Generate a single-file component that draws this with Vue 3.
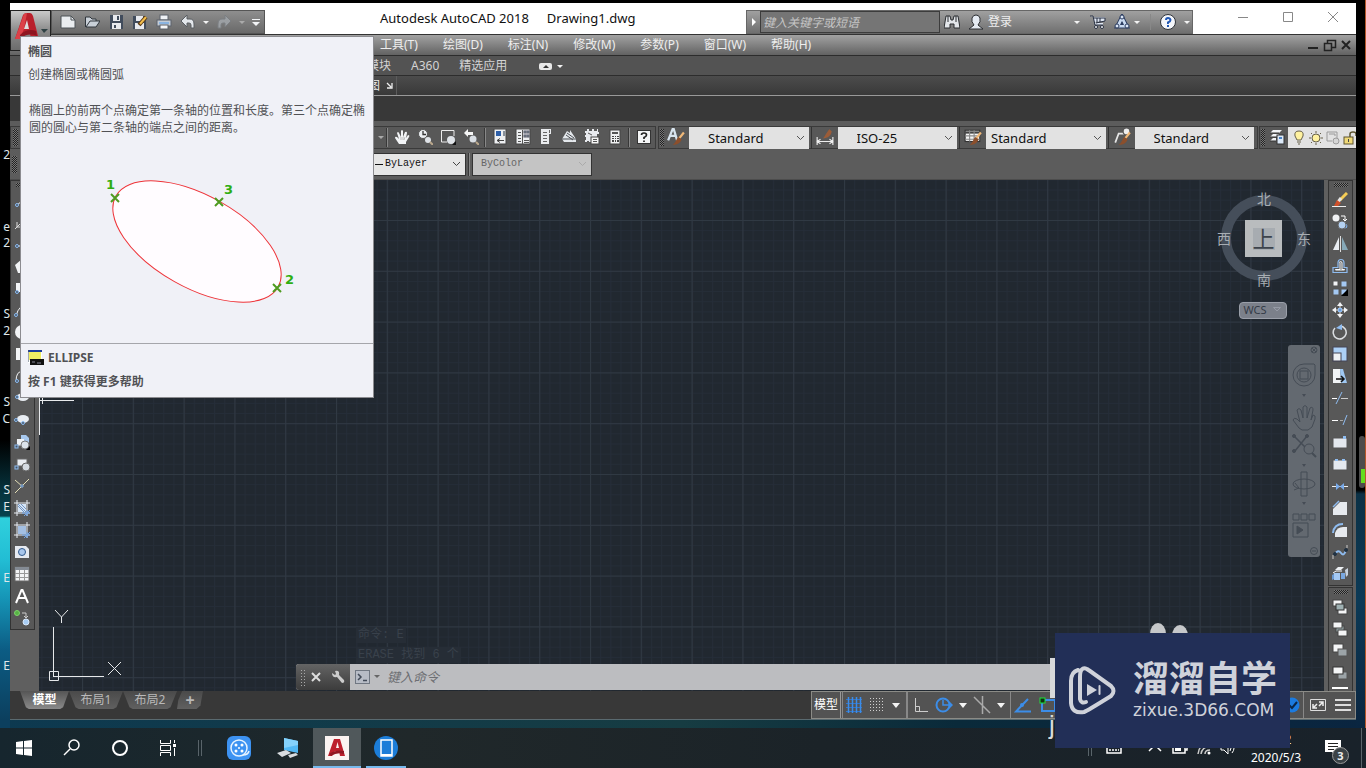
<script setup>
import { ref } from 'vue'

const W = '#f2f4f6'
const B = '#8fbcf0'
const S = (d, c = W, w = 1) => `<path d="${d}" fill="none" stroke="${c}" stroke-width="${w}"/>`
const F = (d, c = W) => `<path d="${d}" fill="${c}"/>`
const R = (x, y, w, h, f = W, s = 'none') => `<rect x="${x}" y="${y}" width="${w}" height="${h}" fill="${f}" stroke="${s}"/>`
const C = (x, y, r, f = W, s = 'none') => `<circle cx="${x}" cy="${y}" r="${r}" fill="${f}" stroke="${s}"/>`
const brush = S('M15 4L11 9', '#f0b878', 2) + F('M10 8L13 10C12 13 10 15 5 15C8 13 8 10 10 8Z', '#8c4f2c')

const icons = {
  new: F('M1 2H11L15 6V14H1Z', '#e9ecef') + S('M1 2H11L15 6V14H1ZM11 2V6H15', '#4d5257'),
  open: F('M1 3H6L8 5H12V7H16L12 13H2Z', '#c9d0d8') + S('M1.500 13V3H6L8 5H12V7M2 13L6 7H16L12 13Z', '#30363d'),
  save: F('M2 1H15V15H2Z', '#414c5c') + R(5, 1, 7, 6, '#e8eaee') + R(9, 2, 2, 4, '#414c5c') + R(4, 9, 9, 6, '#e8eaee') + R(6, 11, 2, 3, '#414c5c'),
  saveas: F('M1 2H14V15H1Z', '#414c5c') + R(4, 2, 7, 5, '#e8eaee') + R(3, 9, 9, 6, '#e8eaee') + S('M14 3L7 11', '#5a3a14', 4) + S('M14 3L8 10', '#f2bd4c', 2),
  print: R(4, 1, 8, 5, '#eef1f5', '#5c636c') + R(1, 6, 14, 6, '#c4ccd6', '#5c636c') + R(3, 8, 10, 2, '#8ab4e2') + R(4, 11, 8, 4, '#f6f7f9', '#5c636c'),
  undo: F('M1 7L7 1V5H10Q14 5 14 10V14H11V11Q11 9 9 9H7V13Z', '#e3e7eb') + S('M1 7L7 1V5H10Q14 5 14 10V14H11V11Q11 9 9 9H7V13Z', '#5a5e63'),
  redo: F('M15 7L9 1V5H6Q2 5 2 10V14H5V11Q5 9 7 9H9V13Z', '#9b9fa3') + S('M15 7L9 1V5H6Q2 5 2 10V14H5V11Q5 9 7 9H9V13Z', '#7b7e82'),
  custom: R(4, 5, 8, 1) + F('M4 8H12L8 12Z'),
  hand: F('M5 15L1 9Q1 7 3 8L5 10L3 4Q4 2 5 4L7 8V2Q8 0 9 2V8L11 3Q13 2 13 4L12 9L14 6Q16 6 15 8L12 13V15Z') + S('M7 8V11M9 8V11M11 8L10 11', '#999', 0.6),
  zoomrt: C(6, 5, 4.500, '#eceff2', '#555') + S('M6 2V5.500H9', '#333', 1.3) + C(11, 11, 3, '#dfe3e8') + S('M13 13L16 16', '#b9a78c', 2),
  zoomwin: S('M14 7V1.500H1.500V13H7', '#ececec') + C(11, 11, 4, '#dfe3e8') + F('M12 16H16V12Z', '#111'),
  zoomprev: F('M1 4L5 0V3H10V6H5V8Z', '#f5f5f5') + C(10, 10, 3.500, '#d9dee4') + S('M13 13L16 16', '#b9a78c', 2),
  props: R(2, 0, 12, 15, '#eef0f2', '#444') + R(4, 2, 5, 5, '#2e5fa8') + R(11, 2, 2, 5, '#86909b') + S('M5 11.500H12M8 9.500L5 11.500L8 13.500', '#444'),
  design: R(1, 0, 14, 15, '#eef0f2', '#444') + S('M3 3.500H6M3 6.500H6M3 9.500H6M3 12.500H6M7.500 1V15', '#555') + R(9, 2, 2, 2, '#9bb', '#556') + R(12, 2, 2, 2, '#9bb', '#556') + R(9, 6, 2, 2, '#9bb', '#556') + R(12, 6, 2, 2, '#9bb', '#556') + S('M9 11.500H14M9 13.500H14', '#555'),
  palette: F('M3 0H13V5H11V15H3Z', '#e9ebee') + S('M5 3.500H9M5 6.500H9M5 9.500H9M5 12.500H9M11.500 1V4', '#666'),
  sheet: F('M1 10L6 2L9 4V1L15 10V13H3Z', '#e4e8ec') + S('M1 10H15M5 6L12 11M6 4L13 9', '#4d5055'),
  markup: F('M1 2H3V0H5V2H8V0H10V2H13V0H14V3H15V5H13V8H7V13H5V12H3V13H1V11H2V8H1V6H2V4H1Z', '#e8eaee') + R(7, 8, 8, 7, '#f5f5f5', '#444') + S('M9 10.500H13M9 12.500H13M4 4L8 6', '#555'),
  calc: R(3, 1, 10, 14, '#f0f1f2', '#444') + R(5, 3, 6, 2, '#555') + F('M5 7H7V8H5ZM8 7H9V8H8ZM10 7H12V8H10ZM5 9H7V10H5ZM8 9H9V10H8ZM10 9H12V10H10ZM5 11H7V13H5ZM8 11H9V13H8ZM10 11H12V13H10Z', '#444'),
  help: R(1.500, 1.500, 13, 13, '#f4f5f6', '#333') + S('M5.500 6Q5.500 4 8 4T10.500 6Q10.500 7.500 8 8.500V10M8 11.500V13', '#222', 1.700),
  textstyle: S('M1 11L5 1H6L9 11M3 7H8', '#d8e4ee', 2) + brush,
  dimstyle: S('M1 8V15M15 8V15M1 12H15M4 10L1 12L4 14M12 10L15 12L12 14', '#eee', 1) + F('M12 1L14 3C13 7 11 9 6 9C8 8 9 4 12 1Z', '#9b5c38'),
  tablestyle: R(1, 2, 13, 10, '#f5f5f5', '#333') + S('M1 4H14', '#444', 2) + S('M1 7H14M1 10H14M5 2V12M9 2V12', '#888') + brush,
  mleader: S('M2 13L5 5H10', '#e6e6e6', 1.500) + C(12, 3, 3, '#eee', '#555') + brush,
  layers: F('M4 1H13L10 4H1ZM4 5H10L8 8H1ZM4 9H7V12H1Z') + S('M1 4H10M1 8H8M1 12H7', '#333') + R(8, 6, 7, 9, '#dce9f8', '#333') + R(10, 8, 3, 2, '#4c82c4'),
  bulb: F('M8 1Q13 1 12 6L10 10H6L4 6Q3 1 8 1Z', '#fff2a0') + S('M8 1Q13 1 12 6L10 10H6L4 6Q3 1 8 1ZM6 12H10M7 14H9', '#66604a'),
  sun: C(8, 8, 4, '#fff2a0', '#66604a') + S('M8 1V3M8 13V15M1 8H3M13 8H15M3 3L4 4M12 12L13 13M13 3L12 4M3 13L4 12', '#66604a'),
  vpfreeze: S('M2 2H12V8M2 2V11H7M4 4H10V6', '#9a9a9a') + C(11, 11, 3, '#d5d5d5', '#9a9a9a'),
  lock: R(2, 7, 9, 7, '#efd979', '#5e5530') + S('M8 7V4Q8 2 11 2T14 4V6', '#5e5530', 1.500) + R(6, 9, 1, 3, '#444'),
  line: S('M2 14L15 3') + C(3, 13, 1.500, '#456', B),
  xline: S('M1 15L15 1M3 8V13H8', '#ddd'),
  pline: S('M2 10H9Q14 9 14 4') + C(3, 10, 1.500, '#456', B),
  polygon: F('M1 7L8 1L15 7L12 15H4Z'),
  rect: R(2, 3, 13, 9) + C(3, 12, 1.500, '#456', B),
  arc: S('M2 14Q5 2 14 3') + C(2, 13, 1.500, '#456', B),
  circle: C(8, 8, 7),
  cloud: F('M2 2H14V14H2Z'),
  spline: S('M2 14Q2 2 9 4T15 2') + C(3, 13, 1.500, '#456', B),
  ellipse: '<ellipse cx="9" cy="7" rx="6" ry="4" fill="#e9edf2"/>' + C(3, 7, 1.500, '#456', B),
  ellarc: '<ellipse cx="9" cy="7" rx="6" ry="4" fill="#e9edf2"/>' + C(2, 8, 1.500, '#456', B) + C(9, 11, 1.500, '#456', B),
  insert: R(3, 6, 8, 6, '#e9edf2', '#666') + F('M7 1H12L15 4V9H7Z', '#a8c9ee') + R(3, 5, 7, 5, '#eef1f4') + C(11, 11, 4, '#dce3ea', '#777') + R(1, 11, 3, 3, '#456', B) + F('M12 16H16V12Z', '#000'),
  block: R(3, 3, 10, 7, '#e9edf2', '#666') + C(12, 11, 4, '#d5dbe2', '#666') + R(1, 10, 3, 3, '#456', B),
  point: S('M1 15L15 1M1 2L9 9', '#e2ddb5') + C(8, 8, 1.200, '#456', B),
  hatch: S('M3 0V16M13 0V16M0 3H16M0 13H16', '#e9eef5') + R(4, 4, 8, 8, '#d5e4f5') + S('M4 6L10 12M4 4L12 12M7 4L12 9', '#7195c4') + S('M8 13H16M13 10V16M10 16L16 10', '#6da4ea'),
  gradient: S('M3 0V16M13 0V16M0 3H16M0 13H16', '#e9eef5') + R(4, 4, 8, 8, '#a3bfe2') + S('M8 13H16M13 10V16M10 16L16 10', '#6da4ea'),
  region: F('M1 2H12L15 5V14H1Z', '#e6eaf0') + C(8, 8, 3.500, '#a9c7ec', '#335a8c'),
  table: R(1, 1, 14, 14, '#f3f4f5', '#666') + R(1, 1, 14, 3, '#848b94') + S('M1 7.500H15M1 11.500H15M5.500 4V15M10.500 4V15', '#999'),
  mtext: S('M2 15L7.500 2H8.500L14 15M4 10H12', '#fff', 2),
  addsel: C(3, 3, 2.500, '#57b345', '#7ed56c') + S('M8 3H12V8M10 6L12 8L14 6', '#ccc') + C(12, 12, 3, '#a8cdf4', '#d8e8fa'),
  erase: S('M0 14.500H14', '#eee') + S('M15 1L8 8', '#f4cc55', 3) + S('M9 6L6 10', '#e4e4e4', 3) + F('M5 8L9 11L6 14H2Z', '#d0502b'),
  copy: C(4, 4, 3.500, '#f0f1f3') + S('M9 2H13V6M11 5L13 7L15 5', '#fff') + C(13, 12, 3, '#7aa8e0', '#555') + C(10, 11, 4, '#b4d0f0', '#666'),
  mirror: F('M7 1V14H1Z', '#e9edf2') + F('M10 1V14H16Z', '#87a9b8') + S('M8.500 0V16', '#ddd'),
  offset: S('M1 14.500H15V9.500H12V5Q12 1.500 9 1.500T6 5V9.500H1Z', B, 1.200) + S('M3.500 12H12.500V11.500H10V5Q10 3.500 8.500 3.500T8 5V11.500H3.500Z', '#f4f7fb', 1),
  array: R(1, 1, 5, 5, '#f3f4f6', '#555') + R(9, 1, 6, 6, '#a4c8f2', '#555') + R(1, 9, 6, 6, '#a4c8f2', '#555') + R(9, 9, 6, 6, '#a4c8f2', '#555') + F('M9 16H16V9Z', '#000'),
  move: F('M8 0L11 4H5ZM8 16L5 12H11ZM0 8L4 5V11ZM16 8L12 11V5Z') + S('M8 4V12M4 8H12', '#eee') + R(6.500, 6.500, 3, 3, '#6f9ad2', B),
  rotate: S('M8 2A6.500 6.500 0 1 1 3 4', '#dcdfe2', 1.500) + F('M4 4L10 0V6Z', B),
  scale: R(1, 1, 14, 14, '#acd0f6', '#445') + R(1, 7, 8, 8, '#eff1f4', '#445'),
  stretch: F('M1 1H8L9 15H1Z', '#f1f3f5') + F('M8 1H11L15 15H9Z', '#9fc8f2') + S('M4 11H11M9 8L12 11L9 14', '#111', 1.500),
  trim: S('M0 8.500H5', '#fff') + S('M4 14L10 2', B) + S('M9 8.500H16', '#ccc', 1),
  extend: S('M0 8.500H6', '#fff') + S('M8 8.500H11', '#aaa') + S('M11 13L15 3', B),
  breakpt: R(1, 4, 14, 10, '#e4e8ee', '#555') + R(11, 2, 3, 3, B),
  break: R(1, 4, 14, 10, '#e4e8ee', '#555') + R(3, 3, 3, 2, B) + R(10, 3, 3, 2, B),
  join: S('M0 8.500H16', '#eee') + F('M4 5L8 8.500L4 12ZM12 5L8 8.500L12 12Z', '#78aaea'),
  chamfer: F('M1 15V9L8 2H15V15Z', '#e7eaee') + S('M1 7L7 1', B, 1.500),
  fillet: F('M3 15V11Q5 5 11 5H15V15Z', '#e7eaee') + S('M1 11Q2 2 11 2', B, 2),
  blend: S('M3 10Q6 5 9 9T14 6', B, 2) + S('M1 15V11M15 4V1', '#ccc') + C(3, 10, 1.500, '#234', '#234') + C(14, 6, 1.500, '#234', '#234'),
  explode: F('M2 7H8V14H2Z', '#a4c8f2') + F('M0 9L2 8V13L0 14Z', '#6a98d0') + F('M9 7H13V13H9Z', '#7aa8e0') + F('M3 4L6 1H12L9 4Z', '#edf0f3') + F('M13 4L16 2V9L14 11Z', '#c8d2de') + S('M1 7L4 5H10', '#fff'),
  order1: R(1, 1, 9, 6, '#f4f5f6', '#444') + R(6, 9, 9, 6, '#f4f5f6', '#444') + R(4, 5, 8, 6, '#9eb0b2', '#333'),
  order2: R(4, 5, 8, 6, '#9eb0b2', '#444') + R(1, 1, 9, 6, '#f4f5f6', '#444') + R(6, 9, 9, 6, '#f4f5f6', '#444'),
  order3: R(1, 1, 10, 8, '#f4f5f6', '#444') + R(6, 6, 9, 7, '#9ca4a8', '#555'),
  order4: R(6, 7, 9, 7, '#9ca4a8', '#555') + R(1, 2, 10, 7, '#f4f5f6', '#333'),
  order5: R(0, 0, 16, 2, '#fff'),
  binoc: F('M2 2H6L7 6H9L10 2H14L16 14H10V10H6V14H0Z', '#e3e6ea') + S('M2 2H6L7 6H9L10 2H14L16 14H10V10H6V14H0ZM4 2V8M12 2V8', '#2a2d31'),
  user: F('M1 15L6 11Q3 8 4 4Q5 1 8 1T12 4Q13 8 10 11L15 15Z', '#e5ebf3') + S('M1 15L6 11Q3 8 4 4Q5 1 8 1T12 4Q13 8 10 11L15 15Z', '#2a2d31'),
  cart: F('M0 2H3L5 11H13V9H6L5 8L15 7V3H4Z', '#dfe6f2') + S('M0 2H3L5 11H13M4 4H15V7L6 9M7 4V8M10 4V8', '#283042') + C(6, 13, 1.500, '#fff', '#283042') + C(12, 13, 1.500, '#fff', '#283042'),
  appA: S('M8 4L4 12H12Z', '#2b3c60', 5) + S('M8 4L4 12H12Z', '#c9d9ef', 3) + C(8, 3, 2, '#dce7f6', '#2b3c60') + C(3, 12, 2, '#dce7f6', '#2b3c60') + C(13, 12, 2, '#dce7f6', '#2b3c60') + F('M8 7L10 11H6Z', '#2b3c60'),
  helpc: C(8, 8, 7.500, '#f4f6fa', '#30343a') + S('M6 6Q6 4 8 4T10.500 6Q10.500 7.500 8 8.500V10M8 11V13', '#2258b4', 2),
}

const qat = [
  ['new', '新建'], ['open', '打开'], ['save', '保存'], ['saveas', '另存为'], ['print', '打印'], ['undo', '放弃'],
  ['arrow', '放弃列表'], ['redo', '重做'], ['arrowdim', '重做列表'], ['custom', '自定义'],
]
const menus = ['工具(T)', '绘图(D)', '标注(N)', '修改(M)', '参数(P)', '窗口(W)', '帮助(H)']
const zoomTools = ['hand', 'zoomrt', 'zoomwin', 'zoomprev']
const paletteTools = ['props', 'design', 'palette', 'sheet', 'markup', 'calc']
const styles = [
  { icon: 'textstyle', label: '文字样式', value: 'Standard', pad: true },
  { icon: 'dimstyle', label: '标注样式', value: 'ISO-25', pad: true },
  { icon: 'tablestyle', label: '表格样式', value: 'Standard', pad: false },
  { icon: 'mleader', label: '多重引线样式', value: 'Standard', pad: true },
]
const layerIcons = ['bulb', 'sun', 'vpfreeze', 'lock']
const drawTools = ['line', 'xline', 'pline', 'polygon', 'rect', 'arc', 'circle', 'cloud', 'spline', 'ellipse', 'ellarc', 'insert', 'block', 'point', 'hatch', 'gradient', 'region', 'table', 'mtext', 'addsel']
const modifyTools = ['erase', 'copy', 'mirror', 'offset', 'array', 'move', 'rotate', 'scale', 'stretch', 'trim', 'extend', 'breakpt', 'break', 'join', 'chamfer', 'fillet', 'blend', 'explode']
const orderTools = ['order1', 'order2', 'order3', 'order4', 'order5']
const layouts = ['模型', '布局1', '布局2']
const active = ref('模型')
const query = ref('')
const command = ref('')
const deskLabels = [['2', 155], ['e', 227], ['2', 243], ['S', 314], ['2', 331], ['S', 402], ['C', 419], ['S', 490], ['E', 507], ['E', 578], ['E', 666]]
</script>

<template>
  <div class="desktop">
    <div class="stage">
      <div class="edge left">
        <span v-for="(d, i) in deskLabels" :key="i" :style="{ top: d[1] - 11 + 'px' }">{{ d[0] }}</span>
      </div>

      <main class="window">
        <header class="titlebar">
          <button class="appbtn" aria-label="应用程序菜单">
            <svg width="40" height="40" viewBox="0 0 40 40">
              <path d="M4 28L12 4Q13 2 16 2H19Q21 2 22 5L27 25V32H21L19 23H12L9 28Z" fill="#b91f2b" />
              <path d="M4 28L13 3L16 2L13 18L9 28Z" fill="#dc4148" />
              <path d="M13 18L16 9L18 18Z" fill="#ddd" />
              <path d="M9 24Q16 17 25 20L26 25Q17 21 9 28Z" fill="#8e1520" />
              <path d="M30 18H37L33 22Z" fill="#2f4144" />
            </svg>
          </button>
          <nav class="qat">
            <button v-for="q in qat" :key="q[1]" :aria-label="q[1]" :class="{ slim: q[0].startsWith('arrow') }">
              <i v-if="q[0].startsWith('arrow')" class="tri" :class="{ dim: q[0] === 'arrowdim' }"></i>
              <svg v-else width="16" height="16" viewBox="0 0 16 16" v-html="icons[q[0]]"></svg>
            </button>
          </nav>
          <h1><span>Autodesk AutoCAD 2018</span><span>Drawing1.dwg</span></h1>
          <div class="info">
            <button class="expand" aria-label="收拢"><svg width="6" height="10" viewBox="0 0 6 10"><path d="M1 1V9L5 5Z" fill="#fff" /></svg></button>
            <input v-model="query" aria-label="搜索" placeholder="键入关键字或短语" />
            <button class="ib" aria-label="查找"><svg width="16" height="16" viewBox="0 0 16 16" v-html="icons.binoc"></svg></button>
            <button class="login"><svg width="16" height="16" viewBox="0 0 16 16" v-html="icons.user"></svg>登录</button>
            <i class="tri push"></i>
            <button class="ib cart" aria-label="应用商店"><svg width="16" height="16" viewBox="0 0 16 16" v-html="icons.cart"></svg></button>
            <button class="ib" aria-label="Autodesk"><svg width="16" height="16" viewBox="0 0 16 16" v-html="icons.appA"></svg></button>
            <i class="tri"></i>
            <button class="ib helpb" aria-label="帮助"><svg width="16" height="16" viewBox="0 0 16 16" v-html="icons.helpc"></svg></button>
            <i class="tri"></i>
          </div>
          <div class="winctl">
            <button aria-label="最小化"><svg width="12" height="12" viewBox="0 0 12 12"><path d="M1 6.500H11" stroke="#888" /></svg></button>
            <button aria-label="最大化"><svg width="12" height="12" viewBox="0 0 12 12"><path d="M1.500 1.500H10.500V10.500H1.500Z" stroke="#888" fill="none" /></svg></button>
            <button aria-label="关闭"><svg width="12" height="12" viewBox="0 0 12 12"><path d="M1 1L11 11M11 1L1 11" stroke="#888" /></svg></button>
          </div>
        </header>

        <nav class="menubar">
          <button v-for="m in menus" :key="m">{{ m }}</button>
          <div class="docctl">
            <svg width="44" height="14" viewBox="0 0 44 14" fill="none" stroke="#222">
              <path d="M1 10H11" stroke-width="2" />
              <path d="M17.500 5.500H24.500V12.500H17.500ZM20.500 5V2.500H28.500V9.500H25" stroke-width="1.500" />
              <path d="M35 3L43 11M43 3L35 11" stroke-width="2" />
            </svg>
          </div>
        </nav>
        <nav class="tabs">
          <button>模块</button><button>A360</button><button>精选应用</button>
          <span class="pill"><i></i></span><i class="tri"></i>
        </nav>
        <div class="panels"><span>图</span><svg width="7" height="7" viewBox="0 0 7 7"><path d="M1 1L5 5M6 1V6H1" stroke="#eee" fill="none" stroke-width="1.300" /></svg></div>
        <div class="gap"></div>

        <section class="bars">
          <div class="row">
            <div class="bar main">
              <i class="grip v"></i>
              <i class="tri dim"></i><i class="sep"></i>
              <button v-for="t in zoomTools" :key="t" :aria-label="t"><svg width="16" height="16" viewBox="0 0 16 16" v-html="icons[t]"></svg></button>
              <i class="sep"></i>
              <button v-for="t in paletteTools" :key="t" :aria-label="t"><svg width="16" height="16" viewBox="0 0 16 16" v-html="icons[t]"></svg></button>
              <i class="sep"></i>
              <button aria-label="帮助"><svg width="16" height="16" viewBox="0 0 16 16" v-html="icons.help"></svg></button>
            </div>
            <div class="bar style">
              <i class="grip v"></i>
              <div v-for="s in styles" :key="s.icon" class="combo">
                <button :aria-label="s.label"><svg width="18" height="18" viewBox="0 0 16 16" v-html="icons[s.icon]"></svg></button>
                <label><select :aria-label="s.label" :class="{ pad: s.pad }"><option>{{ s.value }}</option></select>
                  <svg width="9" height="6" viewBox="0 0 9 6"><path d="M1 1L4.500 4.500L8 1" fill="none" stroke="#555" /></svg></label>
              </div>
            </div>
            <div class="bar layer">
              <i class="grip v"></i>
              <button aria-label="图层"><svg width="16" height="16" viewBox="0 0 16 16" v-html="icons.layers"></svg></button>
              <div class="layerbox"><svg v-for="l in layerIcons" :key="l" width="16" height="16" viewBox="0 0 16 16" v-html="icons[l]"></svg></div>
            </div>
          </div>
          <div class="row second">
            <i class="grip v"></i>
            <label class="lt"><i class="dash"></i><select aria-label="线宽"><option>ByLayer</option></select>
              <svg width="9" height="6" viewBox="0 0 9 6"><path d="M1 1L4.500 4.500L8 1" fill="none" stroke="#444" /></svg></label>
            <i class="sep"></i>
            <label class="lt off"><select aria-label="打印样式" disabled><option>ByColor</option></select>
              <svg width="9" height="6" viewBox="0 0 9 6"><path d="M1 1L4.500 4.500L8 1" fill="none" stroke="#aaa" /></svg></label>
          </div>
        </section>

        <section class="work">
          <aside class="dock">
            <div class="vbar">
              <i class="grip h"></i>
              <button v-for="t in drawTools" :key="t" :aria-label="t"><svg width="16" height="16" viewBox="0 0 16 16" v-html="icons[t]"></svg></button>
            </div>
          </aside>
          <div class="canvas">
            <svg class="grid" width="100%" height="100%">
              <defs>
                <pattern id="minor" x="43" y="40" width="10.16" height="10.16" patternUnits="userSpaceOnUse"><path d="M0 .5H10.16M.5 0V10.16" stroke="#252d38" /></pattern>
                <pattern id="major" x="43" y="40" width="50.8" height="50.8" patternUnits="userSpaceOnUse"><path d="M0 .5H50.8M.5 0V50.8" stroke="#303943" /></pattern>
              </defs>
              <rect width="100%" height="100%" fill="url(#minor)" />
              <rect width="100%" height="100%" fill="url(#major)" />
              <path d="M0.500 217V255M0 217.500H4M3.500 218V224M0 220.500H35" stroke="#e8eaec" fill="none" />
            </svg>
            <svg class="ucs" width="76" height="76" viewBox="0 0 76 76" fill="none" stroke="#e6e8ea">
              <path d="M5.500 22V71M5 71.500H56M1.500 66.500H10.500V75.500H1.500ZM7 5L13.500 12L20 5M13.500 12V18M60 57L73 70M73 57L60 70" />
            </svg>
            <div class="cube">
              <svg width="88" height="88" viewBox="0 0 88 88"><circle cx="44" cy="44" r="38" fill="none" stroke="#454e5a" stroke-width="10" /></svg>
              <b class="n">北</b><b class="w">西</b><b class="e">东</b><b class="s">南</b>
              <button class="face">上</button>
            </div>
            <button class="wcs">WCS <svg width="8" height="5" viewBox="0 0 8 5"><path d="M0.500 0.500H7.500L4 4Z" fill="none" stroke="#959aa5" /></svg></button>
            <div class="nav">
              <svg width="32" height="212" viewBox="0 0 32 212" fill="none" stroke="#454c55">
                <circle cx="26" cy="5" r="3" /><path d="M24 3L28 7M28 3L24 7" />
                <path d="M27 20V30A11 11 0 1 1 16 19H26Z" /><circle cx="16" cy="30" r="7" /><rect x="12" y="26" width="8" height="8" />
                <path d="M14 49H18L16 52ZM14 119H18L16 122ZM14 157H18L16 160Z" fill="#454c55" stroke="none" />
                <path d="M11 83L5 75Q6 72 9 74L12 77L9 65Q11 62 13 65L15 73V62Q17 59 19 62V73L22 63Q25 61 25 65L23 75L25 70Q28 70 27 74L24 82L20 85H14Z" />
                <path d="M7 92L17 102M19 91L7 106" stroke-width="1.500" /><circle cx="6" cy="91" r="1.500" fill="#454c55" /><circle cx="19" cy="91" r="1.500" fill="#454c55" /><circle cx="6" cy="106" r="1.500" fill="#454c55" /><circle cx="21" cy="104" r="5" /><path d="M24 108L28 112" stroke-width="2" />
                <ellipse cx="16" cy="139" rx="11" ry="5" /><path d="M13 127H19V151H13ZM7 138L11 143L6 145" />
                <path d="M5 169H11V175H5ZM13 169H19V175H13ZM21 169H27V175H21ZM5 178H20V192H5Z" /><path d="M9 181V189L15 185Z" fill="#454c55" />
                <circle cx="26" cy="206" r="3.500" /><path d="M24 206H28" />
              </svg>
            </div>
            <div class="history"><p>命令: E</p><p>ERASE 找到 6 个</p></div>
            <form class="cmd" @submit.prevent>
              <div class="cmdgrip">
                <i class="grip v"></i>
                <button aria-label="关闭" type="button"><svg width="10" height="10" viewBox="0 0 10 10"><path d="M1 1L9 9M9 1L1 9" stroke="#ddd" stroke-width="2" /></svg></button>
                <button aria-label="自定义" type="button"><svg width="14" height="14" viewBox="0 0 14 14"><path d="M1 3L4 5L5 4L4 1Q9 0 8 5L13 10Q14 13 11 13L6 7Q1 8 1 3Z" fill="#ccc" /></svg></button>
              </div>
              <svg width="26" height="16" viewBox="0 0 26 16"><rect x=".5" y="1.500" width="14" height="13" fill="#b7bcc6" stroke="#707782" /><path d="M3 5L6 8L3 11M8 11.500H12" fill="none" stroke="#414a58" stroke-width="1.500" /><path d="M19 6H25L22 9Z" fill="#666" /></svg>
              <input v-model="command" aria-label="命令" placeholder="键入命令" />
            </form>
          </div>
          <aside class="dock right">
            <div class="vbar">
              <i class="grip h"></i>
              <button v-for="t in modifyTools" :key="t" :aria-label="t"><svg width="16" height="16" viewBox="0 0 16 16" v-html="icons[t]"></svg></button>
            </div>
            <div class="vbar order">
              <i class="grip h"></i>
              <button v-for="t in orderTools" :key="t" :aria-label="t"><svg width="16" height="16" viewBox="0 0 16 16" v-html="icons[t]"></svg></button>
            </div>
          </aside>
        </section>

        <footer class="foot">
          <div class="layouts">
            <button v-for="l in layouts" :key="l" :class="{ on: active === l }" @click="active = l">{{ l }}</button>
            <button class="plus" aria-label="新建布局">+</button>
          </div>
          <div class="status">
            <button class="model">模型</button>
            <div class="grp g1">
              <svg width="16" height="16" viewBox="0 0 16 16"><path d="M0 2.500H16M0 6.500H16M0 10.500H16M0 14.500H16" stroke="#2f74cc" /><path d="M2.500 0V16M6.500 0V16M10.500 0V16M14.500 0V16" stroke="#3c8de8" stroke-width="1.500" /></svg>
              <svg width="16" height="16" viewBox="0 0 16 16"><path d="M1 1.500H16M1 4.500H16M1 7.500H16M1 10.500H16M1 13.500H16" stroke="#d0d0d0" stroke-dasharray="1 2" /></svg>
              <i class="tri big"></i>
            </div>
            <div class="grp g2">
              <svg width="16" height="16" viewBox="0 0 16 16"><path d="M2.500 1V14.500H15M2 9.500H6.500V14" stroke="#ccc" fill="none" /></svg>
              <svg width="18" height="16" viewBox="0 0 18 16"><circle cx="8" cy="8" r="6.500" stroke="#3c8de8" stroke-width="2" fill="none" /><path d="M8 3V8H17M14 5L17 8L14 11" stroke="#3c8de8" fill="none" stroke-width="1.500" /></svg>
              <i class="tri big"></i>
              <svg width="18" height="18" viewBox="0 0 18 18"><path d="M1 1L17 17M9.500 0V18" stroke="#aaa" stroke-width="1.500" /></svg>
              <i class="tri big"></i>
            </div>
            <div class="grp g3">
              <svg width="18" height="16" viewBox="0 0 18 16"><path d="M14 2L2 14.500H17" stroke="#3c8de8" stroke-width="2" fill="none" /><circle cx="8" cy="8" r="2" fill="#3c8de8" /></svg>
              <svg width="18" height="16" viewBox="0 0 18 16"><path d="M3 3H16V14H3Z" stroke="#3c8de8" stroke-width="2" fill="none" /><rect x="1" y="1" width="5" height="5" fill="#103010" stroke="#1ee03c" /></svg>
            </div>
            <svg class="ok" width="16" height="16" viewBox="0 0 16 16"><circle cx="8" cy="8" r="7.500" fill="#1b7be0" /><path d="M5 8L8 11L13 5" stroke="#0b2748" fill="none" stroke-width="2" /></svg>
            <div class="grp g4">
              <svg width="16" height="14" viewBox="0 0 16 14"><path d="M.5 1.500H15.500V12.500H.5Z" stroke="#ddd" fill="none" /><path d="M3 6V10H7M3 10L7 6M9 4H13V8M13 4L9 8" stroke="#eee" fill="none" stroke-width="1.500" /></svg>
              <svg width="16" height="14" viewBox="0 0 16 14"><path d="M0 2H16M0 7H16M0 12H16" stroke="#ddd" stroke-width="2" /></svg>
            </div>
          </div>
        </footer>

        <article class="tip" role="tooltip">
          <h2>椭圆</h2>
          <p class="sum">创建椭圆或椭圆弧</p>
          <p class="long">椭圆上的前两个点确定第一条轴的位置和长度。第三个点确定椭圆的圆心与第二条轴的端点之间的距离。</p>
          <svg class="art" width="200" height="136" viewBox="101 173 200 136">
            <ellipse cx="197" cy="241.500" rx="93" ry="46" transform="rotate(29.300 197 241.500)" fill="#fffcff" stroke="#ee3338" />
            <path d="M111 194L119 202M119 194L111 202M215 198L223 206M223 198L215 206M273 284L281 292M281 284L273 292" stroke="#4f9b20" stroke-width="2" />
            <g fill="#2fae12" font-family="'DejaVu Sans', sans-serif" font-size="13" font-weight="bold">
              <text x="106" y="189">1</text><text x="224" y="194">3</text><text x="285" y="284">2</text>
            </g>
          </svg>
          <footer>
            <div class="cmdname">
              <svg width="16" height="16" viewBox="0 0 16 16"><rect x="0" y="0" width="14" height="13" fill="#fff" /><rect x="0" y="0" width="14" height="2" fill="#1c3c9c" /><rect x="1" y="2" width="12" height="8" fill="#f1ee63" /><path d="M0 0V12" stroke="#456" /><rect x="2" y="9" width="14" height="6" fill="#111" /><path d="M4 12H7M9 13H13" stroke="#889" /></svg>
              <b>ELLIPSE</b>
            </div>
            <p class="f1">按 F1 键获得更多帮助</p>
          </footer>
        </article>
      </main>

      <div class="edge rightedge"><i class="scroll"></i><i class="green"></i></div>
    </div>

    <nav class="taskbar">
      <button aria-label="开始"><svg width="16" height="16" viewBox="0 0 16 16"><path d="M0 2L7 1V7.500H0ZM8 1L16 0V7.500H8ZM0 8.500H7V15L0 14ZM8 8.500H16V16L8 15Z" fill="#fff" /></svg></button>
      <button aria-label="搜索"><svg width="18" height="18" viewBox="0 0 18 18"><circle cx="11" cy="6" r="5" fill="none" stroke="#fff" stroke-width="1.500" /><path d="M7 10L1 16" stroke="#fff" stroke-width="1.500" /></svg></button>
      <button aria-label="Cortana"><svg width="18" height="18" viewBox="0 0 18 18"><circle cx="9" cy="9" r="7" fill="none" stroke="#fff" stroke-width="2" /></svg></button>
      <button aria-label="任务视图"><svg width="18" height="18" viewBox="0 0 18 18"><path d="M1.500 1V4.500H11.500V1M1.500 17V13.500H11.500V17M1.500 6.500H11.500V11.500H1.500ZM15.500 1V4M15.500 9V17" fill="none" stroke="#fff" /><path d="M14 5H17V8H14Z" fill="#fff" /></svg></button>
      <i class="tsep"></i>
      <button class="app1" aria-label="视频"><svg width="24" height="24" viewBox="0 0 24 24"><rect width="24" height="24" rx="6" fill="#3d93f2" /><circle cx="12" cy="12" r="8" fill="none" stroke="#e6f3ff" stroke-width="1.500" /><path d="M16 19Q21 19 22 15" stroke="#e6f3ff" fill="none" stroke-width="1.500" /><g fill="#fff"><circle cx="9" cy="9" r="1.500" /><circle cx="15" cy="9" r="1.500" /><circle cx="9" cy="15" r="1.500" /><circle cx="15" cy="15" r="1.500" /><circle cx="12" cy="12" r="1" /></g></svg></button>
      <button aria-label="此电脑"><svg width="24" height="24" viewBox="0 0 24 24"><path d="M8 2L22 5V17L8 14Z" fill="#52b8f4" /><path d="M8 2L22 5V9L8 12Z" fill="#84d1fb" /><path d="M1 17L10 14L15 17L6 21ZM12 19L20 17L22 19L14 22Z" fill="#d9dde0" /></svg></button>
      <button class="acad" aria-label="AutoCAD"><svg width="24" height="24" viewBox="0 0 24 24"><rect width="24" height="24" fill="#fbf3f1" /><path d="M3 20L9 3H15L20 20H15L14 15H10L7 20Z" fill="#bd1f2c" /><path d="M11 12L12.500 6L14 12Z" fill="#fbf3f1" /><path d="M4 18Q11 13 19 15V18Q12 16 6 20Z" fill="#921722" /></svg></button>
      <button class="phone" aria-label="手机"><svg width="24" height="24" viewBox="0 0 24 24"><circle cx="12" cy="12" r="12" fill="#1c7dd8" /><rect x="7" y="4" width="11" height="16" fill="none" stroke="#fff" stroke-width="1.500" /><path d="M7 19H18" stroke="#fff" stroke-width="2" /></svg></button>
      <div class="tray">
        <i class="tsep"></i>
        <svg class="t1" width="16" height="12" viewBox="0 0 16 12"><path d="M1 1H15V11H1Z" fill="none" stroke="#fff" stroke-width="1.500" /><path d="M3 4H13M3 8H13" stroke="#fff" stroke-dasharray="2 1" stroke-width="1.500" /></svg>
        <svg class="t2" width="14" height="12" viewBox="0 0 14 12"><path d="M1 9L7 3L13 9" fill="none" stroke="#fff" stroke-width="1.500" /></svg>
        <svg width="16" height="12" viewBox="0 0 16 12"><path d="M1 1H13V11H1ZM13 4H15V8H13" fill="none" stroke="#fff" stroke-width="1.500" /><path d="M3 3H9V9H3Z" fill="#fff" /></svg>
        <svg width="16" height="14" viewBox="0 0 16 14"><path d="M2 13Q3 3 14 1M5 13Q6 6 14 5M9 13Q9 9 14 9" fill="none" stroke="#ccc" stroke-width="1.500" /><circle cx="13" cy="12" r="1.500" fill="#fff" /></svg>
        <svg width="16" height="14" viewBox="0 0 16 14"><path d="M1 5H4L8 1V13L4 9H1ZM10 4Q12 7 10 10M12 2Q16 7 12 12" fill="none" stroke="#fff" /></svg>
        <time><span>21:12</span><span>2020/5/3</span></time>
        <button class="note" aria-label="通知"><svg width="18" height="18" viewBox="0 0 18 18"><path d="M1 1H17V13H12V17L8 13H1Z" fill="#fff" /><path d="M4 4.500H14M4 7.500H14M4 10.500H10" stroke="#222" /></svg><b>3</b></button>
        <i class="peek"></i>
      </div>
    </nav>

    <div class="under"><i class="paw"></i><i class="paw two"></i><i class="stem"></i><span>j</span></div>
    <aside class="brand">
      <svg width="50" height="52" viewBox="0 0 50 52" fill="none" stroke="#cfd2da" stroke-linecap="round">
        <path d="M10 5Q3 7 3 16V38Q4 49 16 47Q19 46 43 31Q48 26 43 21Q22 6 19 4Q12 1 12 12V34Q13 39 18 37" stroke-width="4" />
        <path d="M19 19V31L29 25Z" fill="#cfd2da" stroke="none" /><path d="M31.500 21V29" stroke-width="2" />
      </svg>
      <div><strong>溜溜自学</strong><small>zixue.3D66.COM</small></div>
    </aside>
  </div>
</template>

<style>
html, body { margin: 0; background: #000; overflow: hidden; }
</style>

<style scoped>
* { box-sizing: border-box; }
.desktop { position: relative; height: 100vh; display: flex; flex-direction: column; background: linear-gradient(90deg, #0d3950, #163c42 50%, #0a2a3a 70%, #0a2540); font: 12px/16px "Noto Sans", "Noto Sans CJK SC", sans-serif; color: #eee; overflow: hidden; }
button { appearance: none; border: 0; padding: 0; margin: 0; background: none; color: inherit; font: inherit; display: flex; align-items: center; justify-content: center; flex: none; }
svg { flex: none; display: block; }
h1, h2, p { margin: 0; font-weight: normal; }
i { display: block; flex: none; }
.stage { flex: 1; min-height: 0; display: flex; padding-bottom: 8px; }
.edge { width: 10px; flex: none; position: relative; overflow: hidden; margin-bottom: -8px; }
.left { background: linear-gradient(#000 0 440px, #06323c 490px, #07424e 516px, #2fd0dd 518px, #22bdd4 560px, #1593b5 600px, #0c5c84 650px, #0c3f5e 720px); }
.left span { position: absolute; right: 0; font-size: 12px; line-height: 22px; color: #dfe6ea; }
.rightedge { background: linear-gradient(#000 0 490px, #0b3146 494px, #0c3a56 600px, #0a2540); border-right: 1px solid #b5572a; }
.scroll { position: absolute; top: 436px; right: 0; width: 6px; height: 52px; background: #4c4c4c; border-radius: 3px; }
.green { position: absolute; top: 469px; right: 0; width: 4px; height: 14px; background: #63dc1e; }
.window { flex: 1; min-width: 0; display: flex; flex-direction: column; position: relative; border-top: 3px solid #000; background: #5c5c5c; }

.titlebar { height: 31px; flex: none; background: #fff; display: flex; align-items: flex-end; position: relative; }
.appbtn { position: absolute; left: 0; top: 7px; width: 41px; height: 41px; border: 1px solid #222; background: linear-gradient(#c9c9c9, #8b8b8b 50%, #6c6c6c); z-index: 1; }
.qat { margin-left: 41px; width: 214px; height: 24px; padding-left: 4px; display: flex; align-items: center; background: linear-gradient(#8e8e8e, #696969); border: 1px solid #555; }
.qat button { width: 24px; height: 22px; }
.qat .slim { width: 12px; }
.qat button:last-child { width: 16px; }
.tri { width: 0; height: 0; border: 3px solid transparent; border-top: 3px solid #f3f3f3; border-bottom: 0; }
.tri.dim { border-top-color: #aaa; }
.tri.big { border-width: 5px 4px 0; }
h1 { margin-left: 115px; align-self: center; display: flex; gap: 18px; font: 13px/18px "Noto Sans", sans-serif; color: #111; white-space: nowrap; padding-bottom: 1px; }
.info { margin-left: auto; width: 447px; height: 24px; display: flex; align-items: center; background: linear-gradient(#a0a0a0, #6f6f6f); border: 1px solid #666; }
.expand { width: 13px; }
.info input { width: 180px; height: 22px; flex: none; border: 1px solid #3c3c3c; background: #757575; padding: 0 2px 2px; font: italic 12px/16px "Noto Sans CJK SC", sans-serif; color: #fff; }
.info input::placeholder { color: #c6c6c6; }
.ib { width: 24px; }
.login { gap: 4px; width: 50px; font-size: 12px; margin-left: 1px; }
.push { margin-left: 59px; margin-right: 6px; }
.helpb { margin-left: 10px; border-left: 1px solid #888; width: 34px; }
.winctl { width: 163px; display: flex; align-self: stretch; padding: 0 1px 3px 27px; }
.winctl button { width: 45px; }
.menubar { height: 22px; flex: none; display: flex; align-items: center; gap: 25px; padding-left: 370px; background: linear-gradient(#a2a2a2, #626262); border-top: 1px solid #333; border-bottom: 1px solid #2c2c2c; }
.docctl { margin-left: auto; padding-right: 5px; }
.tabs { height: 20px; flex: none; display: flex; align-items: center; gap: 20px; padding: 1px 0 0 357px; background: #535353; border-bottom: 1px solid #2d2d2d; color: #d4d4d4; }
.pill { width: 13px; height: 7px; border-radius: 2px; background: #e8e8e8; margin-left: 12px; margin-right: -15px; display: flex; align-items: center; justify-content: center; }
.pill i { border: 3px solid transparent; border-bottom: 3px solid #333; border-top: 0; }
.panels { height: 20px; flex: none; display: flex; align-items: center; gap: 6px; padding-left: 358px; background: linear-gradient(#4c4c4c, #393939); border-bottom: 1px solid #999; }
.panels svg { box-sizing: content-box; padding: 6px 3px 6px 0; border-right: 1px solid #5c5c5c; }
.gap { height: 25px; flex: none; background: #383838; }

.bars { height: 59px; flex: none; background: #5c5c5c; padding-top: 5px; display: flex; flex-direction: column; gap: 3px; border-bottom: 1px solid #4c4c4c; }
.row { display: flex; height: 23px; overflow: hidden; flex: none; }
.bar { display: flex; align-items: center; border: 1px solid #3a3a3a; background: #585858; height: 23px; }
.bar button { width: 23px; height: 21px; padding-bottom: 1px; }
.main { width: 646px; justify-content: flex-end; }
.main .grip { margin-right: auto; }
.sep { width: 6px; height: 19px; background: linear-gradient(90deg, transparent 2px, #383838 2px 3px, #888 3px 4px, transparent 4px); }
.grip.v { width: 5px; height: 17px; margin-left: 2px; background: repeating-conic-gradient(#222 0 25%, #777 0 50%) 0 0 / 2px 2px; }
.grip.h { width: 14px; height: 4px; margin: 2px auto; background: repeating-conic-gradient(#222 0 25%, #777 0 50%) 0 0 / 2px 2px; }
.style { margin-left: 2px; width: 600px; padding-right: 1px; }
.style .grip.v { width: 4px; margin-left: 1px; margin-right: -1px; }
.combo { display: flex; flex: 1; align-items: center; }
.combo + .combo { border-left: 1px solid #333; }
.combo button { width: 26px; }
.combo label { flex: 1; position: relative; display: flex; align-items: center; min-width: 0; margin-right: 2px; }
label > svg { position: absolute; right: 4px; pointer-events: none; }
select { appearance: none; width: 100%; height: 22px; border: 0; border-radius: 0; background: #e2e2e2; color: #111; font: 13px/18px "Noto Sans", sans-serif; padding: 0 5px; }
select.pad { padding-left: 19px; }
.layer { margin-left: 1px; flex: 1; border-right: 0; overflow: hidden; }
.layer .grip.v { width: 4px; margin-left: 1px; }
.layerbox { flex: 1; height: 22px; background: #e2e2e2; display: flex; align-items: center; padding-left: 3px; gap: 1px; overflow: hidden; }
.second { align-items: center; height: 24px; }
.lt { display: flex; align-items: center; width: 120px; height: 23px; position: relative; background: #e6e6e6; border: 1px solid #333; }
.second .grip { margin-right: 329px; }
.second .sep { height: 23px; }
.dash { position: absolute; left: 28px; width: 8px; height: 1px; background: #111; }
.lt select { background: transparent; font: 10px/16px "Liberation Mono", monospace; padding-left: 38px; height: 20px; }
.off { background: #c4c4c4; }
.lt.off select { color: #666; opacity: 1; padding-left: 8px; }

.work { flex: 1; min-height: 0; display: flex; overflow: hidden; }
.dock { width: 29px; background: #5f5f5f; flex: none; overflow: hidden; }
.vbar { width: 25px; border: 1px solid #333; background: #585858; display: flex; flex-direction: column; align-items: center; }
.vbar button { height: 22px; width: 24px; padding-right: 1px; }
.right { width: 32px; padding-left: 4px; }
.right .order { margin-top: 1px; }
.canvas { flex: 1; min-width: 0; position: relative; background: #212830; overflow: hidden; }
.grid { position: absolute; inset: 0; }
.ucs { position: absolute; left: 9px; bottom: 10px; }
.cube { position: absolute; right: 16px; top: 14px; width: 88px; height: 88px; }
.cube b { position: absolute; font: 14px/16px "Noto Sans CJK SC", sans-serif; color: #a8adb3; }
.cube .n { left: 37px; top: -4px; }
.cube .s { left: 37px; top: 77px; }
.cube .w { left: -3px; top: 36px; }
.cube .e { left: 77px; top: 36px; }
.face { position: absolute; left: 25px; top: 26px; width: 37px; height: 37px; background: linear-gradient(#a7acb1, #a7acb1) center / 22px 22px no-repeat #b9bcbe; color: #3c434c; font: 22px/32px "Noto Sans CJK SC", sans-serif; padding-bottom: 3px; }
.wcs { position: absolute; right: 37px; top: 122px; width: 48px; height: 17px; border: 1px solid #9a9fa9; border-radius: 4px; background: #7b808a; color: #343b47; font-size: 11px; gap: 6px; padding: 0 2px 2px 0; }
.nav { position: absolute; right: 4px; top: 165px; width: 32px; height: 212px; background: #636970; border-radius: 3px; }
.history { position: absolute; left: 317px; bottom: 28px; color: #39414b; font: 12px/20px "Liberation Mono", "Noto Sans CJK SC", monospace; }
.history p { width: max-content; background: #262d36; line-height: 16px; margin-top: 4px; padding: 0 2px; }
.cmd { position: absolute; left: 257px; right: 244px; bottom: 1px; height: 26px; display: flex; align-items: center; background: #bcbdc0; border-radius: 3px 0 0 3px; overflow: hidden; }
.cmdgrip { width: 54px; height: 26px; background: linear-gradient(#646464, #3c3c3c); display: flex; align-items: center; margin-right: 5px; }
.cmdgrip .grip { margin-left: 4px; background: radial-gradient(#aaa 1px, transparent 1px) 0 0 / 3px 3px; }
.cmdgrip button { width: 22px; }
.cmd input { flex: 1; min-width: 0; border: 0; background: none; font: italic 13px/16px "Noto Sans CJK SC", sans-serif; padding: 0 6px 2px; height: 24px; }
.cmd input::placeholder { color: #6c6e72; }

.foot { height: 29px; flex: none; background: #383838; border-bottom: 1px solid #5a6a70; display: flex; justify-content: space-between; }
.layouts { display: flex; padding-left: 10px; }
.layouts button { height: 18px; width: 54px; background: linear-gradient(#4a4a4a, #606060); color: #b9b9b9; clip-path: polygon(0 0, 100% 0, 88% 90%, 82% 100%, 18% 100%, 12% 90%); font-size: 12px; }
.layouts button.on { background: linear-gradient(#555, #8a8a8a); color: #fff; font-weight: bold; }
.layouts button:first-child { width: 49px; }
.layouts .plus { width: 26px; font-size: 16px; font-weight: bold; clip-path: polygon(20% 0, 100% 0, 90% 80%, 75% 100%, 0 100%, 5% 50%); }
.status { width: 545px; height: 28px; background: #535353; border: 1px solid #8b8b86; display: flex; align-items: center; }
.model { width: 29px; height: 26px; border-right: 1px solid #999; color: #fff; }
.grp { display: flex; align-items: center; height: 26px; border-left: 1px solid #888; border-right: 1px solid #888; }
.g1 { margin-left: 1px; width: 65px; padding-left: 3px; gap: 7px; }
.g2 { width: 104px; padding-left: 5px; gap: 6px; }
.g3 { padding-left: 3px; gap: 7px; border: 0; }
.ok { margin-left: auto; margin-right: 3px; }
.g4 { width: 52px; padding-left: 6px; gap: 9px; border-right: 0; }

.tip { position: absolute; left: 10px; top: 33px; width: 354px; height: 362px; z-index: 5; background: #f0f1f7; border: 1px solid #8c8c90; color: #505155; padding: 6px 7px 0; display: flex; flex-direction: column; }
.tip h2 { font-size: 12px; line-height: 18px; font-weight: bold; }
.sum { margin-top: 5px; line-height: 18px; }
.long { margin: 17px 0 0 1px; line-height: 17px; font-family: "Noto Sans CJK SC", sans-serif; width: 340px; }
.art { margin: 38px 0 0 73px; }
.tip footer { margin: auto -7px 0; border-top: 1px solid #a5a6ab; height: 54px; padding: 4px 7px; }
.cmdname { display: flex; align-items: center; gap: 4px; height: 19px; }
.f1 { font-weight: bold; margin-top: 7px; line-height: 16px; }

.taskbar { height: 40px; flex: none; display: flex; align-items: center; background: linear-gradient(90deg, #16262e, #20282a 30%, #1b2328 60%, #19222a); z-index: 1; }
.taskbar button { width: 48px; height: 40px; }
.tsep { width: 4px; height: 16px; border-left: 1px solid #59646a; border-right: 1px solid #59646a; margin: 0 6px; }
.taskbar .app1 { width: 50px; margin-left: 6px; }
.taskbar .acad { margin-left: 1px; background: #50585b; box-shadow: inset 0 -2px #76b9ed; }
.taskbar .phone { width: 40px; margin-left: 5px; box-shadow: inset 0 -2px #76b9ed; }
.tray { margin-left: auto; display: flex; align-items: center; gap: 8px; }
.tray .t2 { margin-left: 18px; margin-right: 2px; }
time { display: flex; flex-direction: column; align-items: center; width: 64px; line-height: 18px; color: #fff; font-size: 12px; padding-top: 2px; }
.taskbar .note { width: 40px; position: relative; margin-left: -3px; }
.note b { position: absolute; right: 4px; top: 19px; width: 17px; height: 17px; border-radius: 50%; background: #3b4246; border: 1px solid #999; font: bold 11px/15px "Noto Sans", sans-serif; text-align: center; }
.peek { width: 5px; height: 40px; border-left: 1px solid #59646a; }

.under { position: absolute; right: 76px; bottom: 20px; width: 242px; height: 125px; overflow: hidden; }
.under .paw { position: absolute; left: 102px; top: 0; width: 16px; height: 22px; border-radius: 50%; background: #c6c8ca; }
.under .two { left: 124px; top: 2px; }
.under .stem { position: absolute; left: 2px; top: 35px; width: 8px; height: 40px; background: #d8d9da; }
.under span { position: absolute; left: 1px; bottom: 8px; font: 26px/30px "Liberation Sans", sans-serif; color: #d8dadb; }
.under, .brand { z-index: 6; }
.brand { position: absolute; right: 76px; bottom: 20px; width: 235px; height: 115px; background: #222f57; display: flex; align-items: center; gap: 15px; padding-left: 13px; color: #cfd2da; }
.brand div { display: flex; flex-direction: column; }
.brand strong { font: bold 36px/42px "Liberation Sans", "Noto Sans CJK SC", sans-serif; }
.brand small { font: 17px/18px "DejaVu Sans", sans-serif; padding-bottom: 4px; }
</style>
